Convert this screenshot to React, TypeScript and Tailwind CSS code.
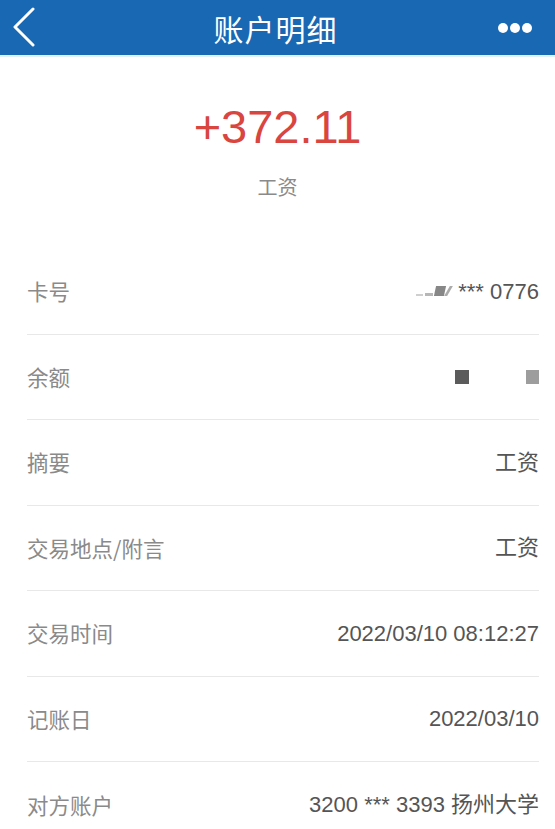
type Row = { label: string; value: React.ReactNode }

const font = { fontFamily: '"Noto Sans CJK SC", "Liberation Sans", sans-serif' }

function CardNo() {
  return (
    <span className="flex items-center">
      <span className="mr-[2px] flex items-end gap-[2px] opacity-70">
        <span className="h-[2px] w-[7px] bg-[#bbb]" />
        <span className="h-[3px] w-[8px] bg-[#999]" />
        <span className="h-[10px] w-[10px] -skew-x-12 bg-[#555]" />
        <span className="h-[10px] w-[3px] -skew-x-[30deg] bg-[#888]" />
      </span>
      <span className="ml-[6px]">*** 0776</span>
    </span>
  )
}

function Balance() {
  return (
    <span className="flex items-center">
      <span className="h-[14px] w-[14px] bg-[#5b5b5b]" />
      <span className="ml-[57px] h-[14px] w-[13px] bg-[#9d9d9d]" />
    </span>
  )
}

const rows: Row[] = [
  { label: '卡号', value: <CardNo /> },
  { label: '余额', value: <Balance /> },
  { label: '摘要', value: '工资' },
  { label: '交易地点/附言', value: '工资' },
  { label: '交易时间', value: '2022/03/10 08:12:27' },
  { label: '记账日', value: '2022/03/10' },
  { label: '对方账户', value: '3200 *** 3393 扬州大学' },
]

export default function App() {
  return (
    <div className="h-[829px] w-[555px] overflow-hidden bg-white" style={font}>
      <header className="grid h-[55px] grid-cols-[1fr_auto_1fr] items-center bg-[#1968b4] pl-[13px] pr-[23px] text-white">
        <svg width="22" height="40" viewBox="0 0 22 40" fill="none" className="mt-[-2px]">
          <polyline points="20,2 2,20 20,38" stroke="white" strokeWidth="3" strokeLinecap="round" strokeLinejoin="round" />
        </svg>
        <h1 className="ml-[6px] text-[30px] leading-none tracking-[1px]">账户明细</h1>
        <div className="flex justify-end gap-[2px]">
          <span className="h-[10px] w-[10px] rounded-full bg-white" />
          <span className="h-[10px] w-[10px] rounded-full bg-white" />
          <span className="h-[10px] w-[10px] rounded-full bg-white" />
        </div>
      </header>
      <div className="h-[2px] bg-[#dff1fa]" />

      <section className="flex flex-col items-center pt-[46px] pb-[52px]">
        <div className="text-[47px] leading-none text-[#d9453f]" style={{ fontFamily: '"Liberation Sans", sans-serif' }}>
          +372.11
        </div>
        <div className="mt-[27px] text-[20px] leading-none text-[#8a8a8a]">工资</div>
      </section>

      <ul className="pl-[27px] pr-[16px]">
        {rows.map((r, i) => (
          <li
            key={r.label}
            className={`flex h-[85.5px] items-center justify-between ${
              i < rows.length - 1 ? 'border-b border-[#e8e8e8]' : ''
            }`}
          >
            <span className="text-[21.5px] text-[#8a8a8a]">{r.label}</span>
            <span
              className="text-[22px] text-[#555]"
              style={{ fontFamily: '"Liberation Sans", "Noto Sans CJK SC", sans-serif' }}
            >
              {r.value}
            </span>
          </li>
        ))}
      </ul>
    </div>
  )
}
